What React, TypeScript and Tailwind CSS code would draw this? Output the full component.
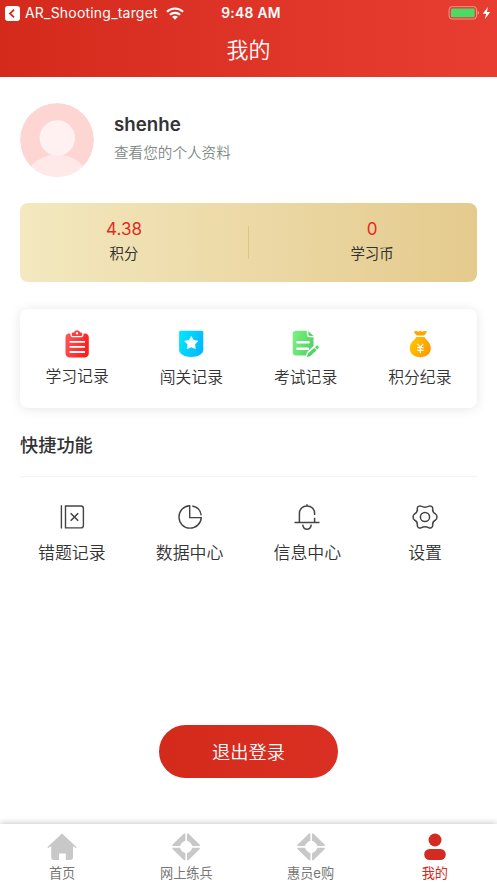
import React from 'react';

const shortcuts = [
  { label: '错题记录', icon: <MistakesIcon /> },
  { label: '数据中心', icon: <ChartIcon /> },
  { label: '信息中心', icon: <BellIcon /> },
  { label: '设置', icon: <SettingsIcon /> },
];

const records = [
  { label: '学习记录', icon: <ClipboardIcon />, gap: 'mt-[7px]' },
  { label: '闯关记录', icon: <BadgeIcon />, gap: 'mt-2' },
  { label: '考试记录', icon: <ExamIcon />, gap: 'mt-2' },
  { label: '积分纪录', icon: <MoneyBagIcon />, gap: 'mt-2' },
];

const tabs = [
  { label: '首页', icon: <HomeIcon />, active: false },
  { label: '网上练兵', icon: <DiamondIcon />, active: false },
  { label: '惠员e购', icon: <DiamondIcon />, active: false },
  { label: '我的', icon: <UserIcon />, active: true },
];

function ClipboardIcon() {
  return (
    <svg className="w-7 h-7" viewBox="0 0 28 28" fill="none">
      <defs>
        <linearGradient id="clip" x1="0" y1="0" x2="1" y2="0.4">
          <stop stopColor="#ff5a5a" />
          <stop offset="1" stopColor="#ff1f1f" />
        </linearGradient>
      </defs>
      <path d="M6 3.5H7.5V4.7C7.5 6.2 8.5 7.3 10 7.3H18C19.5 7.3 20.5 6.2 20.5 4.7V3.5H22C24.2 3.5 25.8 5 25.8 7.2V23.6C25.8 25.8 24.2 27.4 22 27.4H6.4C4.2 27.4 2.5 25.8 2.5 23.6V7.2C2.5 5 4 3.5 6 3.5Z" fill="url(#clip)" />
      <path fillRule="evenodd" d="M11.1 2.5C11.4 1 12.5.5 14 .5S16.7 1 17.1 2.5H18C18.8 2.5 19.2 3 19.2 3.8V4.7C19.2 5.5 18.7 6 18 6H10C9.3 6 8.8 5.5 8.8 4.7V3.8C8.8 3 9.3 2.5 10 2.5ZM14 2A1.2 1.2 0 1014 4.4 1.2 1.2 0 0014 2Z" fill="#fb3b3b" />
      <path d="M6.5 11.8H22M6.5 16.9H22M6.5 22H22" stroke="#fff" strokeWidth="1.8" />
    </svg>
  );
}

function BadgeIcon() {
  return (
    <svg className="w-7 h-7" viewBox="0 0 28 28" fill="none">
      <defs>
        <linearGradient id="badge" x1="0" y1="0.3" x2="1" y2="0.7">
          <stop stopColor="#00e5ff" />
          <stop offset="1" stopColor="#05b5ff" />
        </linearGradient>
      </defs>
      <path d="M3.8.8H24.6C25.6.8 26.3 1.4 26.3 2.4V20C26.3 24.2 20.5 27 14.2 27S2.1 24.2 2.1 20V2.4C2.1 1.4 2.8.8 3.8.8Z" fill="url(#badge)" />
      <path d="M14.3 6.4L16.4 10.2L20.9 11.1L17.8 14.4L18.3 18.7L14.3 16.9L10.3 18.7L10.8 14.4L7.7 11.1L12.2 10.2Z" fill="#fff" stroke="#fff" strokeWidth=".6" strokeLinejoin="round" />
    </svg>
  );
}

function ExamIcon() {
  return (
    <svg className="w-7 h-7" viewBox="0 0 28 28" fill="none">
      <defs>
        <linearGradient id="exam" x1="0" y1="0.3" x2="1" y2="0.7">
          <stop stopColor="#79ef82" />
          <stop offset="1" stopColor="#50d260" />
        </linearGradient>
      </defs>
      <path d="M4 .8H14.8V4.5C14.8 6.2 16 7.3 17.7 7.3H21.5V16L15 22L14 25.4H4C2.1 25.4.7 24.1.7 22.4V3.8C.7 2.1 2.3.8 4 .8Z" fill="url(#exam)" />
      <path d="M16.4.9L21.5 5.9H18C17 5.9 16.4 5.4 16.4 4.5Z" fill="#55d766" />
      <path d="M5.3 12.2H16.6M5.3 18.8H16" stroke="#fff" strokeWidth="2.4" strokeLinecap="round" />
      <path d="M15.1 26.9L16.1 23.5L22.4 17.9L24.5 20.2L18 25.9ZM23.3 17.1L24.6 15.9C25.2 15.5 25.8 15.8 26.2 16.3S26.7 17.7 26.2 18.2L25.2 19.2Z" fill="#50d360" stroke="#50d360" strokeWidth=".4" />
    </svg>
  );
}

function MoneyBagIcon() {
  return (
    <svg className="w-7 h-7" viewBox="0 0 28 28" fill="none">
      <defs>
        <linearGradient id="bag" x1="0" y1="0.3" x2="1" y2="0.7">
          <stop stopColor="#ffc500" />
          <stop offset="1" stopColor="#ff9800" />
        </linearGradient>
      </defs>
      <path d="M8.8 1.2C10.2.6 11.6 1.4 12.5 1.8L14.2.8L15.9 1.8C17 1.3 18.8.6 20.1 1.2C21 1.6 20.9 2.2 20.3 2.8L18.1 5.6H10.8L8.5 2.9C7.8 2.1 8 1.5 8.8 1.2Z" fill="#ffa500" />
      <path d="M10.3 7H18.4C19.5 9.8 24.8 12.2 24.8 18C24.8 24 20.5 27.2 14.3 27.2S3.8 24 3.8 18C3.8 12.2 9.2 9.8 10.3 7Z" fill="url(#bag)" />
      <path d="M11.4 13.8L14.3 17.3L17.2 13.8M11.1 17.7H17.5M11.1 20.3H17.5M14.3 17.5V23" stroke="#fff" strokeWidth="1.2" />
    </svg>
  );
}

function MistakesIcon() {
  return (
    <svg className="w-7 h-7" viewBox="0 0 28 28" fill="none" stroke="#444" strokeWidth="1.4">
      <path d="M3.4 2.3V25.6M7.5 3H23C24.5 3 25.4 3.9 25.4 5.4V22.5C25.4 24 24.5 24.9 23 24.9H7.5Z" />
      <path d="M12.7 10.2L20.2 17.8M20.2 10.2L12.7 17.8" strokeWidth="1.6" />
    </svg>
  );
}

function ChartIcon() {
  return (
    <svg className="w-7 h-7" viewBox="0 0 28 28" fill="none" stroke="#444" strokeWidth="1.4">
      <path d="M13.7 2.8C7.4 3.1 3 8 3 14C3 20.3 7.7 25.1 13.9 25.1S24.9 20.7 25.3 14.6H13.7Z" />
      <path d="M16.3 3C21.2 4 24.7 7.5 25.2 12.4" />
    </svg>
  );
}

function BellIcon() {
  return (
    <svg className="w-7 h-7" viewBox="0 0 28 28" fill="none" stroke="#444" strokeWidth="1.5">
      <path d="M6.4 19.2V10.6C6.4 6 9.6 2.9 14 2.9S21.6 6 21.6 10.6V12M21.6 14.8V19.2M1.5 19.4H26.5M14 1.3V3M9.7 21.6C10.1 24.6 11.7 26.2 14 26.2S17.9 24.6 18.3 21.6" />
    </svg>
  );
}

function SettingsIcon() {
  return (
    <svg className="w-7 h-7" viewBox="0 0 28 28" fill="none" stroke="#444" strokeWidth="1.5" strokeLinejoin="round">
      <path d="M10 3.2C12.3 4.4 15.7 4.4 18 3.2C19.4 2.4 21.9 3.8 21.7 5.5C21.3 8.2 22.2 9.9 24.6 11C26.4 12.2 26.4 15.8 24.6 17C22.2 18.1 21.3 19.8 21.7 22.5C21.9 24.2 19.4 25.6 18 24.8C15.7 23.6 12.3 23.6 10 24.8C8.6 25.6 6.1 24.2 6.3 22.5C6.7 19.8 5.8 18.1 3.4 17C1.6 15.8 1.6 12.2 3.4 11C5.8 9.9 6.7 8.2 6.3 5.5C6.1 3.8 8.6 2.4 10 3.2Z" />
      <circle cx="14" cy="14" r="4.6" />
    </svg>
  );
}

function HomeIcon() {
  return (
    <svg className="w-[30px] h-7" viewBox="0 0 30 28" fill="#c8c8c8">
      <path d="M15 .6L29.7 14.2L28.9 15.1L26 13.3V24.2C26 26 25 27 23.2 27H18.8V20.5H12V27H7C5.2 27 4.2 26 4.2 24.2V13.3L1.1 15.1L.3 14.2Z" />
    </svg>
  );
}

function DiamondIcon() {
  return (
    <svg className="w-7 h-7" viewBox="0 0 28 28" fill="#c8c8c8">
      <path d="M13.4.4V7.7C11 8.4 8.8 10.6 8 13.1H.4V11.8L12 .4ZM15 .4V7.7C17.4 8.4 19.6 10.6 20.4 13.1H27.8V11.8L16.4.4ZM.4 14.8H8C8.8 17.3 11 19.5 13.4 20.2V27.3H12L.4 16ZM27.8 14.8H20.4C19.6 17.3 17.4 19.5 15 20.2V27.3H16.4L27.8 16Z" />
    </svg>
  );
}

function UserIcon() {
  return (
    <svg className="w-7 h-7" viewBox="0 0 28 28" fill="#d32a22">
      <circle cx="14" cy="7" r="6.5" />
      <rect x="3.2" y="16" width="21.6" height="11" rx="5.5" />
    </svg>
  );
}

function StatusBar() {
  return (
    <div className="grid h-[26px] grid-cols-[1fr_auto_1fr] items-center pl-[5px] pr-[5px] font-['Inter','Liberation_Sans',sans-serif]">
      <div className="flex items-center">
        <svg className="h-[15px] w-[15px]" viewBox="0 0 15 15">
          <rect width="15" height="15" rx="3" fill="#fff" />
          <path d="M9 3.6L5 7.5L9 11.4" fill="none" stroke="#d32a1c" strokeWidth="1.8" />
        </svg>
        <span className="ml-[5px] text-[14px] leading-none tracking-[0.2px]">AR_Shooting_target</span>
        <svg className="ml-2 h-[13px] w-[18px]" viewBox="0 0 18 13" fill="none" stroke="#fff" strokeWidth="2.2">
          <path d="M1 4.7C5.4.4 12.6.4 17 4.7M3.9 7.8C6.8 5.1 11.2 5.1 14.1 7.8" />
          <path d="M9 12.7L6.1 9.8C7.7 8.4 10.3 8.4 11.9 9.8Z" fill="#fff" stroke="none" />
        </svg>
      </div>
      <span className="pl-[5px] pt-px text-[13.8px] font-semibold leading-none tracking-[0.3px]">9:48 AM</span>
      <svg className="h-[15px] w-[44px] justify-self-end" viewBox="0 0 44 15">
        <rect x="1.1" y=".6" width="27.4" height="12.4" rx="3" fill="none" stroke="#fff" strokeOpacity=".45" />
        <rect x="2.9" y="2.4" width="23.8" height="8.8" rx="1.3" fill="#4cd964" />
        <path d="M29.7 4.8C31.5 5.5 31.5 8.1 29.7 8.8Z" fill="#fff" fillOpacity=".5" />
        <path d="M40 1L34.7 7.8H38.2L36.8 13.2L42.2 6H38.9Z" fill="#fff" />
      </svg>
    </div>
  );
}

export default function App() {
  return (
    <div className="flex h-[883px] w-full flex-col overflow-hidden bg-white font-['Inter','Noto_Sans_CJK_SC',sans-serif] text-[#333]">
      <header className="h-[77px] shrink-0 bg-gradient-to-r from-[#d32a1c] to-[#e83e32] text-white">
        <StatusBar />
        <h1 className="pt-2 text-center text-[22px] leading-8 font-[350]">我的</h1>
      </header>

      <main className="flex flex-1 flex-col px-5">
        {/* Profile */}
        <section className="flex pt-[26px]">
          <svg className="h-[74px] w-[74px] rounded-full" viewBox="0 0 74 74">
            <circle cx="37" cy="37" r="37" fill="#fdd5d3" />
            <circle cx="37" cy="87" r="35.5" fill="#ffe8e8" />
            <circle cx="37.3" cy="35" r="17.8" fill="#fff0f1" />
          </svg>
          <div className="ml-5 pt-[9px]">
            <div className="text-[18.7px] font-semibold leading-[26px]">shenhe</div>
            <div className="mt-[5px] text-[14.6px] leading-5 font-[350] text-[#7d8783]">查看您的个人资料</div>
          </div>
        </section>

        {/* Points balance */}
        <section className="mt-[26px] flex h-[79px] items-center rounded-lg bg-gradient-to-r from-[#f3e8bf] via-[#ecd9a6] to-[#e4ca8d] text-center">
          <div className="w-[208px] pb-[3px]">
            <div className="text-[17px] leading-6 text-[#df2d22]">4.38</div>
            <div className="mt-0.5 text-[14.4px] leading-[22px]">积分</div>
          </div>
          <div className="ml-5 h-[33px] w-px bg-[#e0c57d]" />
          <div className="ml-[19px] w-[208px] pb-[3px]">
            <div className="text-[17px] leading-6 text-[#df2d22]">0</div>
            <div className="mt-0.5 text-[14.4px] leading-[22px]">学习币</div>
          </div>
        </section>

        {/* Records */}
        <section className="mt-[27px] grid h-[99px] grid-cols-4 rounded-lg bg-white pt-[21px] shadow-[0_1px_12px_rgba(0,0,0,0.10)]">
          {records.map(({ label, icon, gap }) => (
            <div key={label} className="flex flex-col items-center">
              {icon}
              <span className={`${gap} text-[15.8px] leading-6 font-[350]`}>{label}</span>
            </div>
          ))}
        </section>

        <h2 className="mt-[23px] text-[18.2px] font-medium leading-7">快捷功能</h2>
        <hr className="mt-[17px] border-[#f3f3f3]" />

        <section className="-mx-[7px] mt-[26px] grid grid-cols-4">
          {shortcuts.map(({ label, icon }) => (
            <div key={label} className="flex flex-col items-center">
              {icon}
              <span className="mt-2.5 text-[16.9px] leading-6 font-[350]">{label}</span>
            </div>
          ))}
        </section>

        <button className="mx-auto mt-auto mb-[46px] h-[53px] w-[179px] rounded-full bg-gradient-to-r from-[#d32a1b] to-[#da3023] pt-0.5 text-[18.2px] font-[350] text-white">
          退出登录
        </button>
      </main>

      <nav className="grid h-[59px] shrink-0 grid-cols-4 bg-white pt-[9px] shadow-[0_-1px_6px_rgba(0,0,0,0.22)]">
        {tabs.map(({ label, icon, active }) => (
          <div key={label} className="flex flex-col items-center">
            {icon}
            <span className={`mt-[3px] text-[13.2px] leading-[18px] ${active ? 'text-[#d32a22]' : 'text-[#777]'}`}>{label}</span>
          </div>
        ))}
      </nav>
    </div>
  );
}
